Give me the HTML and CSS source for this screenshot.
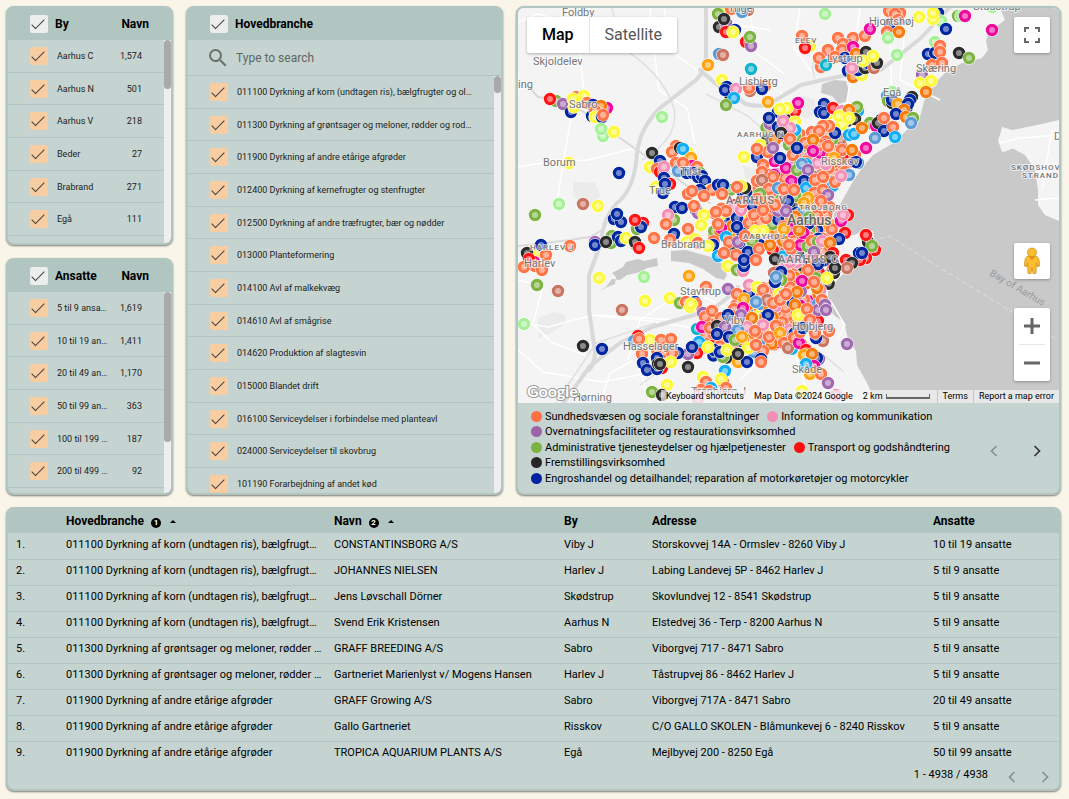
FILE: index.html
```
<!DOCTYPE html>
<html lang="da">
<head>
    <meta charset="UTF-8">
    <meta name="viewport" content="width=device-width, initial-scale=1.0">
    <title>Virksomheder i Aarhus</title>
    <link rel="stylesheet" href="styles.css">
</head>
<body>
<main class="dashboard">

    <!-- Filters -->
    <div class="filter-column">
        <section class="panel">
            <div class="panel-head">
                <input type="checkbox" id="by-all" checked>
                <label for="by-all">By</label>
                <span class="head-count">Navn</span>
            </div>
            <div class="scroll-area scroll-by">
                <ul class="filter-list">
                    <li><input type="checkbox" id="by1" checked><label for="by1">Aarhus C</label><span>1,574</span></li>
                    <li><input type="checkbox" id="by2" checked><label for="by2">Aarhus N</label><span>501</span></li>
                    <li><input type="checkbox" id="by3" checked><label for="by3">Aarhus V</label><span>218</span></li>
                    <li><input type="checkbox" id="by4" checked><label for="by4">Beder</label><span>27</span></li>
                    <li><input type="checkbox" id="by5" checked><label for="by5">Brabrand</label><span>271</span></li>
                    <li><input type="checkbox" id="by6" checked><label for="by6">Egå</label><span>111</span></li>
                </ul>
                <div class="scrollbar"><div class="thumb thumb-by"></div></div>
            </div>
        </section>

        <section class="panel">
            <div class="panel-head">
                <input type="checkbox" id="ans-all" checked>
                <label for="ans-all">Ansatte</label>
                <span class="head-count">Navn</span>
            </div>
            <div class="scroll-area scroll-ansatte">
                <ul class="filter-list">
                    <li><input type="checkbox" id="an1" checked><label for="an1">5 til 9 ansatte</label><span>1,619</span></li>
                    <li><input type="checkbox" id="an2" checked><label for="an2">10 til 19 ansatte</label><span>1,411</span></li>
                    <li><input type="checkbox" id="an3" checked><label for="an3">20 til 49 ansatte</label><span>1,170</span></li>
                    <li><input type="checkbox" id="an4" checked><label for="an4">50 til 99 ansatte</label><span>363</span></li>
                    <li><input type="checkbox" id="an5" checked><label for="an5">100 til 199 ansatte</label><span>187</span></li>
                    <li><input type="checkbox" id="an6" checked><label for="an6">200 til 499 ansatte</label><span>92</span></li>
                </ul>
                <div class="scrollbar"><div class="thumb thumb-ansatte"></div></div>
            </div>
        </section>
    </div>

    <section class="panel">
        <div class="panel-head">
            <input type="checkbox" id="hb-all" checked>
            <label for="hb-all">Hovedbranche</label>
        </div>
        <div class="search">
            <svg width="24" height="24" viewBox="0 0 24 24"><path fill="#66706d" d="M15.5 14h-.79l-.28-.27A6.471 6.471 0 0 0 16 9.500 6.500 6.500 0 1 0 9.500 16c1.610 0 3.090-.59 4.230-1.570l.27.28v.79l5 4.990L20.490 19l-4.990-5zm-6 0C7.010 14 5 11.990 5 9.500S7.010 5 9.500 5 14 7.010 14 9.500 11.990 14 9.500 14z"/></svg>
            <input type="text" placeholder="Type to search" aria-label="Type to search">
        </div>
        <div class="scroll-area scroll-branche">
            <ul class="filter-list">
                <li><input type="checkbox" id="hb1" checked><label for="hb1">011100 Dyrkning af korn (undtagen ris), bælgfrugter og olieholdige frø</label></li>
                <li><input type="checkbox" id="hb2" checked><label for="hb2">011300 Dyrkning af grøntsager og meloner, rødder og rodknolde</label></li>
                <li><input type="checkbox" id="hb3" checked><label for="hb3">011900 Dyrkning af andre etårige afgrøder</label></li>
                <li><input type="checkbox" id="hb4" checked><label for="hb4">012400 Dyrkning af kernefrugter og stenfrugter</label></li>
                <li><input type="checkbox" id="hb5" checked><label for="hb5">012500 Dyrkning af andre træfrugter, bær og nødder</label></li>
                <li><input type="checkbox" id="hb6" checked><label for="hb6">013000 Planteformering</label></li>
                <li><input type="checkbox" id="hb7" checked><label for="hb7">014100 Avl af malkekvæg</label></li>
                <li><input type="checkbox" id="hb8" checked><label for="hb8">014610 Avl af smågrise</label></li>
                <li><input type="checkbox" id="hb9" checked><label for="hb9">014620 Produktion af slagtesvin</label></li>
                <li><input type="checkbox" id="hb10" checked><label for="hb10">015000 Blandet drift</label></li>
                <li><input type="checkbox" id="hb11" checked><label for="hb11">016100 Serviceydelser i forbindelse med planteavl</label></li>
                <li><input type="checkbox" id="hb12" checked><label for="hb12">024000 Serviceydelser til skovbrug</label></li>
                <li><input type="checkbox" id="hb13" checked><label for="hb13">101190 Forarbejdning af andet kød</label></li>
            </ul>
            <div class="scrollbar"><div class="thumb thumb-branche"></div></div>
        </div>
    </section>

    <!-- Map -->
    <section class="panel map-panel">
        <div class="map">
            <svg class="map-canvas" viewBox="518 8 541 395" preserveAspectRatio="xMidYMid slice">
                <rect x="518" y="8" width="541" height="395" fill="#f4f4f4"/>
                <!-- woods and fields -->
                <g fill="#ebebeb">
                    <path d="M573 181l12 2 9-1 6 12-3 14-12-3-12-9zM538 318l16-6 11 3v9l-14 9-13 5zM742 165l18 6 2 14-16-6z"/>
                    <path d="M800 95l14 4 4 14-12 6-9-8zM795 272l20-6 10 16-6 20-18-6z"/>
                </g>
                <!-- sea -->
                <path fill="#c9c9c9" d="M1000 8l5 12-16 12-3 9 2 9-6 8-20 5-16 9-10 10-10 13-4 14-2 8-10 10-15 15-22 13-11 13-10 15-10 18-8 13 0 12 8 6 12 4 11-8 8 3 2 12-14 15-14 12-9 9-9 10-4 12 1 6 9 9 9 6 4 17 8 12 1 14 10 18 4 9v12h190V221l-14-6-7-10v-15l-3-20-10-15-13-7-10 4-5-12 3-13 10 3 30-6 19-4V8z"/>
                <path fill="#f4f4f4" d="M838 240l22-7 8-2 4 12-4 10-20 14-12 5zM998 140l5-12 2 5 30-7 24-6v101l-14-6-7-10v-15l-3-20-10-15-13-7-10 4z"/>
                <path fill="#c9c9c9" d="M822 84l12-4 12 1 3 10-2 10-8 3-7-8-11-3zM598 291l17-7 1-7-4-4 11-6 3-5 12-3 6 2 13-3 1 8-11 2-6 4-14 3-7 5-8-1-6 8zM671 251l15-1 14 4 15 4 8 7 4 10-3 5-8-2-13-9-14-6-18-2z"/>
                <!-- minor roads -->
                <g fill="none" stroke="#fff" stroke-width="1.500">
                    <path d="M518 22l20-8 30 8 22-14M580 53l4 40-12 20-9 50-6 40M518 167l30-5 40-2 48-12M650 8l5 50 4 32 28 18 8 35M700 72l-28-20-8-44M518 280l25 6-10 38 18 18 36 14M518 322l30 5 45-12 85 5M518 350l25 22 60 10 40-8M590 315l60 6 50 8M600 403l10-30 22-12M670 300l-30 20-12 40M650 403l-12-40M770 30l-40-6M750 12l5 40 30 22M800 8l-6 40 22 30M860 8l-8 60-12 80M890 20l2 90M905 30l-5 50 40 20M780 90l20 60 20 80 8 70M720 240l80 20M690 290l60 30 70 30M760 280l30 60 20 60M1059 135l-40 3-20 5M1035 200l24-2M1042 190l10-60M830 300l15 25-8 15M740 380l30-30"/>
                </g>
                <!-- railways and secondary roads -->
                <g fill="none" stroke="#e0e0e0" stroke-width="1.500">
                    <path d="M612 8l10 40q40 24 52 60 6 30-32 52M556 403l40-60 60-20M720 330l-30 20-50 35M706 94l42 22 40 36M790 330l30 22 24 20M815 78q-8-18 10-30"/>
                </g>
                <!-- motorways -->
                <g fill="none" stroke="#d9d9d9" stroke-width="4" stroke-linecap="round" stroke-linejoin="round">
                    <path d="M706 6v50q0 14-10 24l-36 28q-20 20-23 45-2 36-20 50-14 15-16 40l-12 32v35l6 42q0 12-6 18"/>
                    <path d="M560 408l30-42 30-23 32-16 42-12q26-6 44-28"/>
                    <path d="M700 70l16 14 30 20q14 4 25-1l30-18q40-10 80-15l40-32 30-32"/>
                    <path stroke-width="2" d="M518 84l12 4 8 9 14 2 30 12 62 44 26 18 40 30M518 246l44-5 28-4 14-8"/>
                </g>
                <!-- ferry route -->
                <path fill="none" stroke="#dedede" stroke-dasharray="5 3" d="M872 241l17-5 45 28 124 76"/>
                <g id="pins"></g>
                <g class="place">
                    <text x="562" y="16">Foldby</text><text x="533" y="65">Skjoldelev</text><text x="518" y="88">ing</text>
                    <text x="569" y="108">Sabro</text><text x="543" y="166">Borum</text><text x="739" y="85">Lisbjerg</text>
                    <text x="728" y="12">Trige</text><text x="869" y="25">Hjortshøj</text><text x="827" y="62">Lystrup</text><text x="916" y="72">Skæring</text>
                    <text x="973" y="10">Studstrup</text><text x="883" y="96">Egå</text><text x="821" y="165">Risskov</text><text x="1054" y="140">D</text>
                    <text x="680" y="175">Tilst</text><text x="649" y="194">True</text><text x="661" y="248">Brabrand</text>
                    <text x="524" y="267">Harlev</text><text x="680" y="295">Stavtrup</text><text x="724" y="324">Viby</text>
                    <text x="792" y="330">Højbjerg</text><text x="792" y="373">Skåde</text><text x="623" y="350">Hasselager</text>
                    <text x="573" y="401">Hørning</text><text x="691" y="395">Tranbjerg J</text>
                </g>
                <g class="place district">
                    <text x="737" y="137">AARHUS N</text><text x="795" y="43">ELEV</text><text x="799" y="210">TRØJBORG</text>
                    <text x="743" y="239">AABYHØJ</text><text x="530" y="250">HARLEV J</text>
                    <text x="1011" y="170">SKØDSHOV</text><text x="1022" y="178">STRAND</text>
                </g>
                <g class="place district-large">
                    <text x="726" y="204">AARHUS V</text><text x="778" y="263">AARHUS C</text>
                </g>
                <text class="place city" x="787" y="225">Aarhus</text>
                <text class="bay" x="989" y="275" transform="rotate(30 989 275)">Bay of Aarhus</text>
            </svg>

            <div class="map-types">
                <button type="button" class="active">Map</button>
                <button type="button">Satellite</button>
            </div>
            <button type="button" class="map-button fullscreen" aria-label="Fullscreen">
                <svg width="18" height="18" viewBox="0 0 18 18"><path fill="none" stroke="#666" stroke-width="2" d="M2 6V2h4M12 2h4v4M16 12v4h-4M6 16H2v-4"/></svg>
            </button>
            <button type="button" class="map-button pegman" aria-label="Street View">
                <svg width="18" height="28" viewBox="0 0 18 28">
                    <path fill="#fbbc2e" stroke="#c48d20" stroke-width=".7" d="M5 9h8q2.500 1 3 3.500l.6 6.500-2.200.7-.9-3.700-.5 10.500H10l-1-6-1 6H5L4.500 16l-.9 3.700-2.200-.7.6-6.500Q2.500 10 5 9z"/>
                    <circle cx="9" cy="5.500" r="4.500" fill="#fbbc2e" stroke="#c48d20" stroke-width=".7"/>
                    <path fill="#e58a1f" d="M5.500 9.300h7L9 13z"/>
                </svg>
            </button>
            <div class="zoom">
                <button type="button" aria-label="Zoom in"><svg width="18" height="18" viewBox="0 0 18 18"><path fill="none" stroke="#666" stroke-width="3" d="M1 9h16M9 1v16"/></svg></button>
                <button type="button" aria-label="Zoom out"><svg width="18" height="18" viewBox="0 0 18 18"><path fill="none" stroke="#666" stroke-width="3" d="M1 9h16"/></svg></button>
            </div>
            <span class="logo">Google</span>
            <div class="attribution">
                <button type="button">Keyboard shortcuts</button>
                <span>Map Data ©2024 Google</span>
                <span class="scale">2 km <i></i></span>
                <a href="#">Terms</a>
                <a href="#">Report a map error</a>
            </div>
        </div>

        <div class="legend">
            <ul>
                <li><i class="dot care"></i>Sundhedsvæsen og sociale foranstaltninger</li>
                <li><i class="dot info"></i>Information og kommunikation</li>
                <li><i class="dot hotel"></i>Overnatningsfaciliteter og restaurationsvirksomhed</li>
                <li><i class="dot admin"></i>Administrative tjenesteydelser og hjælpetjenester</li>
                <li><i class="dot transport"></i>Transport og godshåndtering</li>
                <li><i class="dot factory"></i>Fremstillingsvirksomhed</li>
                <li><i class="dot trade"></i>Engroshandel og detailhandel; reparation af motorkøretøjer og motorcykler</li>
            </ul>
            <div class="legend-nav">
                <button type="button" class="chevron" aria-label="Previous" disabled><svg width="24" height="24" viewBox="0 0 24 24"><path d="M15 6l-6 6 6 6"/></svg></button>
                <button type="button" class="chevron" aria-label="Next"><svg width="24" height="24" viewBox="0 0 24 24"><path d="M9 6l6 6-6 6"/></svg></button>
            </div>
        </div>
    </section>

    <!-- Company table -->
    <section class="panel table-panel">
        <table>
            <colgroup>
                <col class="col-no"><col class="col-branche"><col class="col-navn"><col class="col-by"><col class="col-adresse"><col>
            </colgroup>
            <thead>
                <tr>
                    <th></th>
                    <th>Hovedbranche <span class="sort">1</span><i class="arrow"></i></th>
                    <th>Navn <span class="sort">2</span><i class="arrow"></i></th>
                    <th>By</th>
                    <th>Adresse</th>
                    <th>Ansatte</th>
                </tr>
            </thead>
            <tbody>
                <tr><td>1.</td><td>011100 Dyrkning af korn (undtagen ris), bælgfrugter og olieholdige frø</td><td>CONSTANTINSBORG A/S</td><td>Viby J</td><td>Storskovvej 14A - Ormslev - 8260 Viby J</td><td>10 til 19 ansatte</td></tr>
                <tr><td>2.</td><td>011100 Dyrkning af korn (undtagen ris), bælgfrugter og olieholdige frø</td><td>JOHANNES NIELSEN</td><td>Harlev J</td><td>Labing Landevej 5P - 8462 Harlev J</td><td>5 til 9 ansatte</td></tr>
                <tr><td>3.</td><td>011100 Dyrkning af korn (undtagen ris), bælgfrugter og olieholdige frø</td><td>Jens Løvschall Dörner</td><td>Skødstrup</td><td>Skovlundvej 12 - 8541 Skødstrup</td><td>5 til 9 ansatte</td></tr>
                <tr><td>4.</td><td>011100 Dyrkning af korn (undtagen ris), bælgfrugter og olieholdige frø</td><td>Svend Erik Kristensen</td><td>Aarhus N</td><td>Elstedvej 36 - Terp - 8200 Aarhus N</td><td>5 til 9 ansatte</td></tr>
                <tr><td>5.</td><td>011300 Dyrkning af grøntsager og meloner, rødder og rodknolde</td><td>GRAFF BREEDING A/S</td><td>Sabro</td><td>Viborgvej 717 - 8471 Sabro</td><td>5 til 9 ansatte</td></tr>
                <tr><td>6.</td><td>011300 Dyrkning af grøntsager og meloner, rødder og rodknolde</td><td>Gartneriet Marienlyst v/ Mogens Hansen</td><td>Harlev J</td><td>Tåstrupvej 86 - 8462 Harlev J</td><td>5 til 9 ansatte</td></tr>
                <tr><td>7.</td><td>011900 Dyrkning af andre etårige afgrøder</td><td>GRAFF Growing A/S</td><td>Sabro</td><td>Viborgvej 717A - 8471 Sabro</td><td>20 til 49 ansatte</td></tr>
                <tr><td>8.</td><td>011900 Dyrkning af andre etårige afgrøder</td><td>Gallo Gartneriet</td><td>Risskov</td><td>C/O GALLO SKOLEN - Blåmunkevej 6 - 8240 Risskov</td><td>5 til 9 ansatte</td></tr>
                <tr><td>9.</td><td>011900 Dyrkning af andre etårige afgrøder</td><td>TROPICA AQUARIUM PLANTS A/S</td><td>Egå</td><td>Mejlbyvej 200 - 8250 Egå</td><td>50 til 99 ansatte</td></tr>
            </tbody>
        </table>
        <div class="pager">
            <span>1 - 4938 / 4938</span>
            <button type="button" class="chevron" aria-label="Previous page" disabled><svg width="24" height="24" viewBox="0 0 24 24"><path d="M15 6l-6 6 6 6"/></svg></button>
            <button type="button" class="chevron" aria-label="Next page" disabled><svg width="24" height="24" viewBox="0 0 24 24"><path d="M9 6l6 6-6 6"/></svg></button>
        </div>
    </section>
</main>
<script src="map.js"></script>
</body>
</html>
```
FILE: styles.css
```
* {
    box-sizing: border-box;
}

body {
    margin: 0;
    background-color: #faf5e9;
    font-family: Roboto, "Liberation Sans", sans-serif;
    font-size: 11px;
    color: #000;
}

ul {
    list-style: none;
    margin: 0;
    padding: 0;
}

button {
    font-family: inherit;
    border: none;
    padding: 0;
    cursor: pointer;
}

.dashboard {
    display: grid;
    grid-template-columns: minmax(0, 167fr) minmax(0, 317fr) minmax(0, 545fr);
    gap: 12px 13px;
    padding: 6px 8px 8px 6px;
}

.filter-column {
    display: flex;
    flex-direction: column;
    gap: 13px;
}

.panel {
    overflow: hidden;
    background-color: #c5d4d0;
    border: 2px solid #b1c6c1;
    border-radius: 8px;
    box-shadow: 0 1px 2px rgba(0, 0, 0, 0.5);
}

/* Filter header */
.panel-head {
    display: flex;
    align-items: center;
    gap: 7px;
    height: 32px;
    padding: 0 22px;
    background-color: #b1c6c1;
    font-size: 12px;
    font-weight: bold;
}

.head-count {
    margin-left: auto;
}

/* Tick boxes */
input[type="checkbox"] {
    appearance: none;
    position: relative;
    flex: none;
    width: 18px;
    height: 18px;
    margin: 0;
    border-radius: 2px;
    background-color: #f8cda2;
}

.panel-head input[type="checkbox"] {
    background-color: #ebeeed;
}

input[type="checkbox"]:checked::before {
    content: "";
    position: absolute;
    left: 5px;
    top: 1px;
    width: 5px;
    height: 12px;
    border: solid #444;
    border-width: 0 1px 1px 0;
    transform: rotate(45deg);
}

/* Filter rows */
.scroll-area {
    display: flex;
    overflow: hidden;
}

.scroll-by {
    height: 203px;
}

.scroll-ansatte {
    height: 201px;
}

.scroll-branche {
    height: 417px;
}

.filter-list {
    flex: 1;
    min-width: 0;
    font-size: 9px;
    color: #1c1c1c;
}

.filter-list li {
    display: flex;
    align-items: center;
    gap: 9px;
    height: 33px;
    padding: 0 22px;
    border-bottom: 1px solid #b1c6c1;
}

.filter-list li:nth-child(3n+2) {
    height: 32px;
}

.filter-list label {
    flex: 1;
    min-width: 0;
    overflow: hidden;
    white-space: nowrap;
    text-overflow: ellipsis;
}

.filter-list span {
    width: 25px;
    text-align: right;
}

.scrollbar {
    width: 7px;
    background-color: #eee;
}

.thumb {
    border-radius: 4px;
    background-color: #a9a9a9;
}

.thumb-by {
    height: 49px;
}

.thumb-ansatte {
    height: 150px;
}

.thumb-branche {
    height: 17px;
}

/* Search box */
.search {
    display: flex;
    align-items: center;
    gap: 6px;
    height: 36px;
    padding-left: 18px;
    border-bottom: 1px solid #b1c6c1;
}

.search input {
    flex: 1;
    min-width: 0;
    padding: 0;
    border: none;
    outline: none;
    background: none;
    font-family: inherit;
    font-size: 12px;
}

.search input::placeholder {
    color: #5d6664;
}

/* Map */
.map-panel {
    display: flex;
    flex-direction: column;
}

.map {
    position: relative;
    flex: 1;
    min-height: 395px;
    background-color: #f4f4f4;
}

.map-canvas {
    position: absolute;
    width: 100%;
    height: 100%;
}

.place {
    font-size: 11px;
    fill: #757575;
    stroke: rgba(255, 255, 255, 0.7);
    stroke-width: 2px;
    stroke-linejoin: round;
    paint-order: stroke;
}

.district {
    font-size: 8px;
    font-weight: 500;
    letter-spacing: 1px;
}

.district-large {
    font-size: 11px;
    font-weight: 500;
    letter-spacing: 1px;
}

.city {
    font-size: 14px;
    font-weight: 500;
    fill: #666;
}

.bay {
    font-size: 10px;
    fill: #999;
}

.map-types {
    position: absolute;
    left: 9px;
    top: 9px;
    display: flex;
    height: 36px;
    border-radius: 2px;
    background-color: #fff;
    box-shadow: 0 1px 3px rgba(0, 0, 0, 0.3);
}

.map-types button {
    padding: 0 15px 2px;
    background: none;
    font-size: 16px;
    color: #565656;
}

.map-types .active {
    border-right: 1px solid #e6e6e6;
    font-weight: 500;
    color: #000;
}

.map-button,
.zoom {
    position: absolute;
    right: 9px;
    width: 36px;
    border-radius: 2px;
    background-color: #fff;
    box-shadow: 0 1px 3px rgba(0, 0, 0, 0.3);
}

.map-button {
    display: flex;
    align-items: center;
    justify-content: center;
    height: 36px;
}

.fullscreen {
    top: 9px;
}

.pegman {
    bottom: 124px;
}

.zoom {
    bottom: 22px;
    padding: 0 5px;
}

.zoom button {
    display: flex;
    align-items: center;
    justify-content: center;
    width: 26px;
    height: 36px;
    background: none;
}

.zoom button + button {
    height: 37px;
    border-top: 1px solid #e6e6e6;
}

.logo {
    position: absolute;
    left: 9px;
    bottom: 2px;
    font-family: Lato, sans-serif;
    font-size: 16px;
    font-weight: bold;
    line-height: 20px;
    color: #fff;
    -webkit-text-stroke: 2px #999;
    paint-order: stroke;
}

.attribution {
    position: absolute;
    right: 0;
    bottom: 0;
    display: flex;
    height: 13px;
    background-color: rgba(245, 245, 245, 0.7);
    white-space: nowrap;
}

.attribution > * {
    padding: 0 5px;
    background: none;
    font-size: 9px;
    line-height: 13px;
    text-decoration: none;
    color: #000;
}

.attribution a {
    border-left: 1px solid #c4c4c4;
}

.attribution .scale {
    display: flex;
    align-items: center;
    gap: 3px;
    padding-right: 7px;
}

.scale i {
    width: 44px;
    height: 5px;
    border: 2px solid #666;
    border-width: 0 1px 2px;
}

/* Legend */
.legend {
    display: flex;
    align-items: center;
    justify-content: space-between;
    height: 90px;
    padding: 0 10px 0 13px;
}

.legend ul {
    display: flex;
    flex-wrap: wrap;
    align-content: space-between;
    width: 440px;
    height: 77px;
    margin-bottom: 2px;
    column-gap: 8px;
    line-height: 15px;
}

.legend li {
    display: flex;
    align-items: center;
    gap: 3px;
}

.dot {
    width: 11px;
    height: 11px;
    border-radius: 50%;
}

.care { background-color: #ff7043; }
.info { background-color: #f48fb1; }
.hotel { background-color: #9c64a6; }
.admin { background-color: #7cb342; }
.transport { background-color: #ff0d0d; }
.factory { background-color: #262626; }
.trade { background-color: #0022a0; }

.legend-nav {
    display: flex;
    gap: 19px;
    padding-top: 5px;
}

.chevron {
    width: 24px;
    height: 24px;
    background: none;
}

.chevron svg {
    display: block;
    padding: 2px;
}

.chevron path {
    fill: none;
    stroke: #333;
    stroke-width: 2px;
}

.chevron:disabled path {
    stroke: #87918e;
}

/* Table */
.table-panel {
    grid-column: 1 / -1;
}

table {
    width: 100%;
    table-layout: fixed;
    border-collapse: collapse;
}

.col-no { width: 50px; }
.col-branche { width: 268px; }
.col-navn { width: 230px; }
.col-by { width: 88px; }
.col-adresse { width: 281px; }

th,
td {
    overflow: hidden;
    padding: 0 4px 3px 8px;
    text-align: left;
    white-space: nowrap;
    text-overflow: ellipsis;
}

th {
    height: 24px;
    padding: 0 4px 0 8px;
    background-color: #b1c6c1;
    font-size: 12px;
}

td {
    height: 26px;
    border-bottom: 1px solid #b1c6c1;
}

tr:last-child td {
    border-bottom: none;
}

.sort {
    display: inline-block;
    width: 10px;
    height: 10px;
    margin: 0 9px 0 4px;
    border-radius: 50%;
    background-color: #000;
    font-size: 8px;
    line-height: 10px;
    text-align: center;
    color: #fff;
}

.arrow {
    display: inline-block;
    border: 3px solid transparent;
    border-top: none;
    border-bottom-color: #000;
    vertical-align: middle;
}

.pager {
    display: flex;
    align-items: center;
    justify-content: flex-end;
    gap: 9px;
    height: 22px;
    padding: 0 2px 2px 0;
}

.pager span {
    margin-right: 3px;
    padding-bottom: 5px;
}
```
FILE: map.js
```
// One letter per industry
const colors = {
    o: '#ff7547', b: '#0026a0', y: '#fdf93a', g: '#7cb342', k: '#2b2b2b', r: '#ff1414',
    p: '#a069b0', i: '#f48fb5', m: '#f0089c', a: '#ffa412', l: '#a6f197', c: '#12adf5',
    s: '#5c9bd6', t: '#10b3cc', w: '#cb7460', d: '#f67a0c'
};

// Companies as <industry><x>,<y>, later ones are drawn on top
const companies = `
y720,11 g718,14 o731,9 w748,10 s742,12 k719,27 p726,23 k724,19 b735,30 r726,32 y733,32 r746,42 p751,46 g750,37
s719,54 w723,55 a708,65 t751,69 y722,80 b727,87 k730,95 b725,90 i736,89 w750,91 o749,88 o765,86 b762,89 c734,98 g726,105 a768,102
g556,101 r550,99 p563,104 b571,112 o576,97 y584,96 y574,107 y573,99 o587,103 b593,105 m607,108 b592,116 d601,106 o595,111 y595,117 b602,117 o603,115
l603,136 l601,129 y614,132 l662,117 y569,163 b619,173 k652,153 y650,167 b660,161 o657,169 r660,172 i664,167 b664,178 r670,184 y656,187 b663,193 b665,184
o676,146 o672,152 k680,148 y688,153 c683,149 a691,158 o676,163 s678,171 m692,166 o683,163 o697,167 g700,173 b687,173 b693,173 b698,177 b702,176 b705,181
o688,194 y710,190 o712,190 b700,190 o692,191 o704,196 g730,190 b742,191 b746,193 k745,188 y741,186 b718,185 b723,185 o737,187 o722,194
l559,204 w583,204 y598,206 g535,215 b614,219 b621,222 b617,214 r643,223 g637,229 b641,227 r635,220
p595,242 b595,245 g612,236 g611,243 k606,242 b618,237 b621,241 y626,238 b637,246 g638,247 k635,242 r639,248
y599,278 l644,277 y645,301 w622,310 w558,291 g537,285 y538,252 b541,245 k527,253 m534,262 r529,259 o546,255 o535,266 o524,267 o542,270 o570,246 l524,324 k583,346 b602,349
y672,215 b675,207 b682,208 g674,220 i668,215 o666,224 o688,229 b674,234 o654,238 o670,240 k696,210 p698,213 o694,206 y704,215 y701,225 y687,242 y695,239 o698,243 b713,245 y708,246
l825,14 o802,36 y810,46 r805,48 o838,38 o853,38 w849,45 o843,44 o842,50 o865,36 m870,29 o828,50 o821,67 o819,58 t826,65 o835,57
b845,58 m853,47 d856,54 k866,52 b848,71 k853,74 d853,77 y862,75 b858,70 k865,68 b868,63 w874,68 k877,63 y873,56 y863,61 i852,68
l897,55 b890,24 o889,11 o900,13 o895,14 o898,20 o887,32 l888,38 d899,32 l935,42 y919,17 b938,13 l941,21 y933,19 y933,13 b946,29 g958,16 l961,16 m965,16 m992,30 l992,7
k959,53 g969,58 b928,54 b935,53 o940,46 o940,52 o932,65 o942,63 p922,75 y920,83 y931,81 d926,92
s887,96 l892,92 g888,101 k892,103 b892,100 a898,104 b907,107 k912,97 b910,100 b908,104 d904,110 b896,114 d906,117 g913,118 s911,123
g870,123 b883,122 b881,120 m876,126 k878,123 o884,118 b884,131 o893,127 c895,137 s875,138 m866,148
b824,104 b820,112 c858,111 y828,114 b824,113 r833,108 i842,111 g857,107 d849,110 k847,121 k855,119 y842,125 y839,116 y849,118 c849,135 c854,134 d862,128 b835,133
o829,126 o823,126 o812,132 o819,131 o805,143 o820,145 d813,140
b778,112 k784,116 r795,111 m798,103 y795,122 y787,108 y780,109 b769,118 b778,127 c795,130 i790,128 i783,121 k767,140 d775,140 k781,133 g789,145 o790,139 y760,145 b757,157 o768,152 o757,149
p773,148 y744,157 o763,165 o762,172 m774,175 o757,181 o773,177 w762,180 i788,160 o793,155 m786,168 b780,158 b797,148 m813,151 o828,146 o842,150 a834,158 i826,164 s858,163 o855,155 b856,162 d852,150
g797,170 s802,164 p808,170 b804,181 c806,188 o815,180 o823,177 o845,172 o835,182 s849,175 i841,176 o769,189 s778,188 o784,189 o794,190 b752,205 g760,194 i734,208 b737,218 b737,227 y720,215
o726,211 o716,212 m721,228 o718,224 i741,210 o749,223 o760,222 o766,218 o754,215 o763,210 b788,201 p786,211 o742,202 o775,205 o757,199
o814,193 o823,190 p828,195 a808,198 a804,203 o821,201 y763,231 y755,231 c726,237 o729,242 p738,242 g752,241 b748,252 o736,255 o759,249 d770,245 o745,236 d783,241 o789,245
m791,229 a784,229 d799,230 o812,241 r848,215 m841,221 i843,215 r845,233 b839,239 g818,242 i822,241 d830,243 p814,252
k868,242 r875,250 r866,235 g872,246 r866,258 r860,260 b859,253 b862,253 r833,253 k830,257 r846,260 k852,263 w847,268 k834,273 k835,268
c718,256 o724,253 y728,266 g737,270 i743,271 b744,266 b744,260 o756,260 k775,259 i790,262 b818,264 o808,270 w774,273 b781,272 g781,280 b775,282 s776,277
a689,276 o706,287 p728,289 b749,293 i749,285 o737,294 a744,299 y757,287 o763,290 w767,300 s756,302 m802,281 y827,278 d817,288 o814,282 d797,292 o773,303 o780,300 o786,294 d795,305
y670,298 g680,303 b695,302 o686,302 o696,304 y690,307 y691,304 p703,313 o705,317 o712,311 o721,318 b728,315 m743,308 p741,315 d752,318 b768,315
s818,304 p818,310 o822,300 p825,305 p826,310 y798,315 o807,309 o810,320 i747,327 i763,325 o776,326 s738,330 t697,329 m702,327 o710,328 k717,326 o723,332 p725,327
b717,334 b729,337 g735,340 a742,337 c699,342 r697,353 p688,354 b692,347 k688,367 b678,353 b714,350 g723,357 b720,352 y727,350 y708,347 s753,352 y748,348 a738,362 b747,362 k738,354
o769,337 o755,331 a780,333 o763,351 b761,359 o761,362 o756,345 o784,343 w788,348 o794,338 m799,343 o800,332 b803,328 w823,341 b816,338 o829,331 o815,333 p847,344
r806,350 p819,359 b817,358 a804,355 d812,354 m814,366 o808,369 a810,374 c806,364 o821,374 p828,383 y802,391 i836,395
r638,336 s634,341 y650,340 o661,340 o671,339 o639,339 o642,354 o657,350 o664,352 o672,353 b643,363 b647,370 b657,358 r662,368 b657,369 y671,362 k658,364 k660,364
c725,371 y703,377 o706,382 o723,382 y721,379 o726,388 c711,388 o701,390 o709,391 y667,385 g652,392 k662,395 i698,399
`;

// Districts with many companies: [centre x, centre y, radius x, radius y, number]
const districts = [
    [800, 225, 32, 58, 190],
    [770, 215, 40, 36, 70],
    [775, 318, 44, 34, 130],
    [730, 340, 30, 22, 50],
    [818, 160, 32, 30, 75],
    [782, 150, 22, 38, 30],
    [726, 232, 22, 24, 30],
    [808, 265, 26, 34, 60]
];
const mix = 'oooooooooooooooodddbbbbykgggmmppiiacrswo';

const pins = document.getElementById('pins');

function addCircle(x, y, r, attributes) {
    const circle = document.createElementNS('http://www.w3.org/2000/svg', 'circle');
    circle.setAttribute('cx', x);
    circle.setAttribute('cy', y);
    circle.setAttribute('r', r);
    for (const name in attributes) {
        circle.setAttribute(name, attributes[name]);
    }
    pins.appendChild(circle);
}

function addPin(type, x, y) {
    addCircle(x, y, 6.7, {fill: '#fff'});
    addCircle(x, y, 4.6, {
        fill: colors[type],
        'fill-opacity': 0.55,
        stroke: colors[type],
        'stroke-width': 3.2
    });
}

// Fixed seed, so that the map looks the same on every load
let seed = 7;

function random() {
    seed = (seed * 16807) % 2147483647;
    return seed / 2147483647;
}

for (const [cx, cy, rx, ry, count] of districts) {
    for (let i = 0; i < count; i++) {
        const angle = random() * Math.PI * 2;
        const distance = Math.sqrt(random());
        const type = mix[Math.floor(random() * mix.length)];
        addPin(type, cx + Math.cos(angle) * distance * rx, cy + Math.sin(angle) * distance * ry);
    }
}

for (const company of companies.trim().split(/\s+/)) {
    const [x, y] = company.slice(1).split(',').map(Number);
    addPin(company[0], x, y);
}
```
